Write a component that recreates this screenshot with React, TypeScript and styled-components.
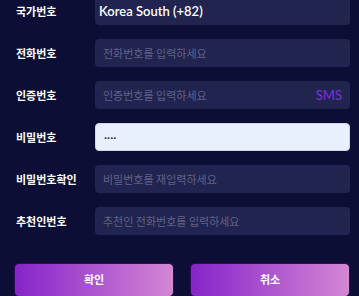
import styled, { createGlobalStyle } from "styled-components";

const GlobalStyle = createGlobalStyle`
  html, body {
    margin: 0;
    padding: 0;
    background: #0c0e36;
    font-family: "Noto Sans", "Noto Sans CJK KR", sans-serif;
  }
`;

const fields = [
  { label: "국가번호", value: "Korea South (+82)", placeholder: "" },
  { label: "전화번호", value: "", placeholder: "전화번호를 입력하세요" },
  { label: "인증번호", value: "", placeholder: "인증번호를 입력하세요", sms: true },
  { label: "비밀번호", value: "····", placeholder: "", filled: true },
  { label: "비밀번호확인", value: "", placeholder: "비밀번호를 재입력하세요" },
  { label: "추천인번호", value: "", placeholder: "추천인 전화번호를 입력하세요" },
];

const App = () => {
  return (
    <>
      <GlobalStyle />
      <Page>
        <Form>
          {fields.map((f) => (
            <Row key={f.label}>
              <Label>{f.label}</Label>
              <InputWrapper>
                <Input
                  $filled={!!f.filled}
                  defaultValue={f.value}
                  placeholder={f.placeholder}
                  readOnly
                />
                {f.sms && <SmsButton>SMS</SmsButton>}
              </InputWrapper>
            </Row>
          ))}
        </Form>
        <ButtonRow>
          <GradientButton>확인</GradientButton>
          <GradientButton>취소</GradientButton>
        </ButtonRow>
      </Page>
    </>
  );
};

export default App;

const Page = styled.div`
  width: 359px;
  height: 296px;
  overflow: hidden;
  box-sizing: border-box;
  padding: 0 9px 0 14px;
`;

const Form = styled.div`
  margin-top: -3px;
  display: flex;
  flex-direction: column;
  gap: 14px;
`;

const Row = styled.div`
  display: grid;
  grid-template-columns: 81px 255px;
  align-items: center;
`;

const Label = styled.span`
  padding-left: 2px;
  color: #ffffff;
  font-size: 11px;
  font-weight: 700;
  font-family: "Noto Sans CJK KR", sans-serif;
`;

const InputWrapper = styled.div`
  position: relative;
  height: 28px;
`;

const Input = styled.input<{ $filled: boolean }>`
  box-sizing: border-box;
  width: 100%;
  height: 28px;
  border-radius: 4px;
  outline: none;
  padding: 0 8px 0 ${(p) => (p.$filled ? "8px" : "4px")};
  font-family: "Lato", "Noto Sans CJK KR", sans-serif;
  font-size: ${(p) => (p.$filled ? "12px" : "13px")};
  border: ${(p) => (p.$filled ? "1px solid #cfd6e8" : "none")};
  background: ${(p) => (p.$filled ? "#e8f0fe" : "#21244f")};
  color: ${(p) => (p.$filled ? "#1a1a2e" : "#ffffff")};
  font-weight: ${(p) => (p.$filled ? 400 : 600)};

  &::placeholder {
    color: #5f6388;
    font-family: "Noto Sans CJK KR", sans-serif;
    font-size: 11px;
    font-weight: 400;
  }
  &:placeholder-shown {
    padding-left: 8px;
  }
`;

const SmsButton = styled.span`
  position: absolute;
  right: 8px;
  top: 50%;
  transform: translateY(-50%);
  color: #7a2ed6;
  font-family: "Lato", sans-serif;
  font-size: 13px;
  font-weight: 500;
`;

const ButtonRow = styled.div`
  margin-top: 28px;
  display: flex;
  gap: 16px;
`;

const GradientButton = styled.button`
  width: 160px;
  height: 34px;
  border: 1px solid #2a1050;
  border-radius: 5px;
  background: linear-gradient(90deg, #8624c8 0%, #b15ad0 55%, #d487d3 100%);
  color: #ffffff;
  font-family: "Noto Sans CJK KR", sans-serif;
  font-size: 11px;
  font-weight: 700;
  padding: 0;
  padding-bottom: 2px;
`;
